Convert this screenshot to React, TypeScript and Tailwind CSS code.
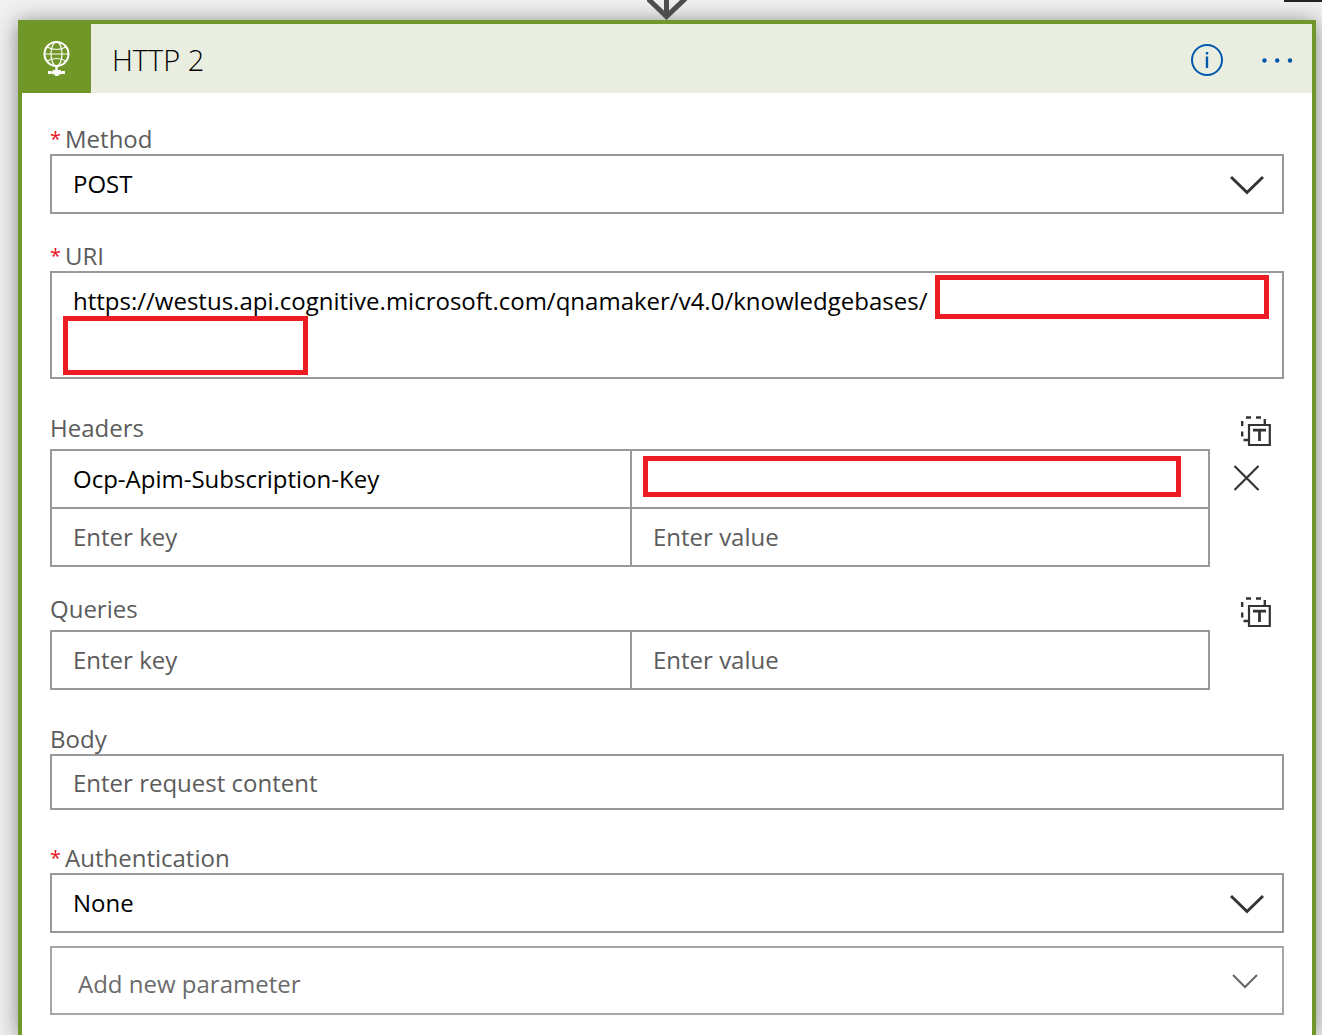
import type { ReactNode } from "react";

const boxClass =
  "block w-full rounded-none border-2 border-[#999999] bg-white px-[21px] text-2xl text-black outline-none placeholder:text-[#5c5c5c] placeholder:opacity-100";

function FieldLabel({ htmlFor, required, children }: { htmlFor: string; required?: boolean; children: ReactNode }) {
  return (
    <label htmlFor={htmlFor} className="flex h-8 items-center gap-1 pt-0.5 text-2xl leading-8 text-[#5c5c5c]">
      {required && <span className="text-xl text-[#e81123]">*</span>}
      <span>{children}</span>
    </label>
  );
}

function Chevron() {
  return (
    <svg viewBox="0 0 34 20" className="pointer-events-none absolute top-[21px] right-5 h-5 w-[34px]" fill="none" stroke="#333333" strokeWidth="3">
      <path d="M1 2 17 17.5 33 2" />
    </svg>
  );
}

function SelectField({ id, label, value }: { id: string; label: string; value: string }) {
  return (
    <div>
      <FieldLabel htmlFor={id} required>{label}</FieldLabel>
      <div className="relative">
        <select id={id} className={`${boxClass} h-[60px] appearance-none`}>
          <option>{value}</option>
        </select>
        <Chevron />
      </div>
    </div>
  );
}

function TextModeIcon() {
  return (
    <svg viewBox="0 0 30 31" className="h-[31px] w-[30px]" fill="none" stroke="#333333" strokeWidth="2">
      <path d="M5 1.5h5M15 1.5h5M1.2 5v5M1.2 15.5v5M23.8 3v5M2.5 24H7" strokeWidth="2.4" />
      <path d="M8 9h20.8v20H8z" strokeWidth="2.200" />
      <path d="M12 14.2h13M18.5 14v11" strokeWidth="2.8" />
    </svg>
  );
}

function KeyValueHeading({ children }: { children: ReactNode }) {
  return (
    <div className="flex h-[38px] items-start justify-between pr-[13px]">
      <h2 className="pt-px text-2xl leading-8 text-[#5c5c5c]">{children}</h2>
      <button type="button" aria-label={`Switch ${children} to text mode`} className="pt-[5px]">
        <TextModeIcon />
      </button>
    </div>
  );
}

function KeyInput({ name, value }: { name: string; value?: string }) {
  return (
    <input
      aria-label={`${name} key`}
      placeholder="Enter key"
      defaultValue={value}
      className="h-14 w-full min-w-0 px-[21px] pb-0.5 text-2xl text-black outline-none placeholder:text-[#5c5c5c] placeholder:opacity-100"
    />
  );
}

function ValueInput({ name, masked }: { name: string; masked?: boolean }) {
  return (
    <div className="relative border-l-2 border-[#999999]">
      <input
        aria-label={`${name} value`}
        placeholder={masked ? "" : "Enter value"}
        className="h-14 w-full min-w-0 px-[21px] pb-0.5 text-2xl text-black outline-none placeholder:text-[#5c5c5c] placeholder:opacity-100"
      />
      {masked && <div className="absolute top-[5px] right-[27px] left-[11px] h-[41px] border-5 border-[#ed1c24] bg-white" />}
    </div>
  );
}

function GlobeIcon() {
  return (
    <svg viewBox="0 0 28 36" className="h-9 w-7" fill="none" stroke="#ffffff">
      <circle cx="13.5" cy="13" r="12" strokeWidth="2" />
      <ellipse cx="13.5" cy="13" rx="5.5" ry="12" strokeWidth="1.2" />
      <path d="M1.5 13h24M4 6q9.5 5 19 0M4 20q9.500-5 19 0" strokeWidth="1.1" />
      <path d="M13.5 25v4" strokeWidth="2.4" />
      <path d="M5 31.500h3.500M18.500 31.500h3.500" strokeWidth="3" />
      <path d="M8 31.500h11" strokeWidth="1.500" />
      <path d="M9.500 29h8.500v4.500h-8.500zM12 33h3.500v2h-3.500z" fill="#ffffff" stroke="none" />
    </svg>
  );
}

export default function App() {
  return (
    <main className="relative flex min-h-screen flex-col overflow-hidden bg-[#f0f0f0] pr-1.5 pl-[18px] font-['Open_Sans',sans-serif]">
      <div className="absolute top-0 right-0 h-0.5 w-[38px] bg-[#222222]" />
      <div className="relative z-10 flex h-5 shrink-0 justify-center">
        <svg viewBox="0 0 40 20" className="h-5 w-10" fill="none" stroke="#4d4d4d" strokeWidth="5">
          <path d="M19.5 0v15M-2.5-4.5 19.5 16.5 41.5-4.5" />
        </svg>
      </div>

      <section className="grow border-4 border-b-0 border-[#709727] bg-white shadow-[0_2px_20px_rgba(0,0,0,0.45)]">
        <header className="flex h-[69px] items-center bg-[#eaeee0]">
          <div className="flex h-full w-[69px] items-center justify-center bg-[#709727]">
            <GlobeIcon />
          </div>
          <h1 className="grow pt-0.5 pl-[21px] text-[29px] leading-9 font-light text-black">HTTP 2</h1>
          <button type="button" aria-label="Information" className="mr-[37px] pt-[3px]">
            <svg viewBox="0 0 34 34" className="h-[34px] w-[34px]" fill="none" stroke="#0058ad" strokeWidth="2">
              <circle cx="17" cy="17" r="15" />
              <path d="M17 13.5V25M17 9v2.5" strokeWidth="2.4" />
            </svg>
          </button>
          <button type="button" aria-label="More commands" className="mr-[19px] pt-[3px]">
            <svg viewBox="0 0 32 6" className="h-1.5 w-8" fill="#0058ad">
              <circle cx="3.5" cy="3.5" r="2.2" />
              <circle cx="16.2" cy="3.5" r="2.2" />
              <circle cx="29" cy="3.5" r="2.2" />
            </svg>
          </button>
        </header>

        <form className="px-7 pt-[29px]">
          <SelectField id="method" label="Method" value="POST" />

          <div className="pt-[25px]">
            <FieldLabel htmlFor="uri" required>URI</FieldLabel>
            <div className="relative">
              <textarea
                id="uri"
                spellCheck={false}
                defaultValue="https://westus.api.cognitive.microsoft.com/qnamaker/v4.0/knowledgebases/"
                className={`${boxClass} h-[108px] resize-none overflow-hidden py-2.5 leading-9`}
              />
              <div className="absolute top-1 right-[15px] h-11 w-[334px] border-5 border-[#ed1c24] bg-white" />
              <div className="absolute top-[45px] left-[13px] h-[59px] w-[245px] border-5 border-[#ed1c24] bg-white" />
            </div>
          </div>

          <div className="pt-8">
            <KeyValueHeading>Headers</KeyValueHeading>
            <div className="flex items-start">
              <div className="grow border-2 border-[#999999]">
                <div className="grid grid-cols-2">
                  <KeyInput name="Header 1" value="Ocp-Apim-Subscription-Key" />
                  <ValueInput name="Header 1" masked />
                </div>
                <div className="grid grid-cols-2 border-t-2 border-[#999999]">
                  <KeyInput name="Header 2" />
                  <ValueInput name="Header 2" />
                </div>
              </div>
              <div className="w-[74px] shrink-0 pt-4 pl-6">
                <button type="button" aria-label="Delete header" className="block">
                  <svg viewBox="0 0 26 26" className="h-[26px] w-[26px]" fill="none" stroke="#333333" strokeWidth="2.2">
                    <path d="M.5 1 24.5 25M24.5 1 .5 25" />
                  </svg>
                </button>
              </div>
            </div>
          </div>

          <div className="pt-[25px]">
            <KeyValueHeading>Queries</KeyValueHeading>
            <div className="mr-[74px] grid grid-cols-2 border-2 border-[#999999]">
              <KeyInput name="Query 1" />
              <ValueInput name="Query 1" />
            </div>
          </div>

          <div className="pt-8">
            <FieldLabel htmlFor="body">Body</FieldLabel>
            <input id="body" placeholder="Enter request content" className={`${boxClass} h-14`} />
          </div>

          <div className="pt-[31px]">
            <SelectField id="authentication" label="Authentication" value="None" />
          </div>

          <div className="relative pt-[13px]">
            <select
              aria-label="Add new parameter"
              className="block h-[69px] w-full appearance-none rounded-none border-2 border-[#a6a6a6] bg-white px-[26px] pt-1.5 text-2xl text-[#6b6b6b] outline-none"
            >
              <option>Add new parameter</option>
            </select>
            <svg viewBox="0 0 26 15" className="pointer-events-none absolute right-[26px] bottom-[26px] h-[15px] w-[26px]" fill="none" stroke="#666666" strokeWidth="2">
              <path d="M1 1 13 13 25 1" />
            </svg>
          </div>
        </form>
      </section>
    </main>
  );
}
